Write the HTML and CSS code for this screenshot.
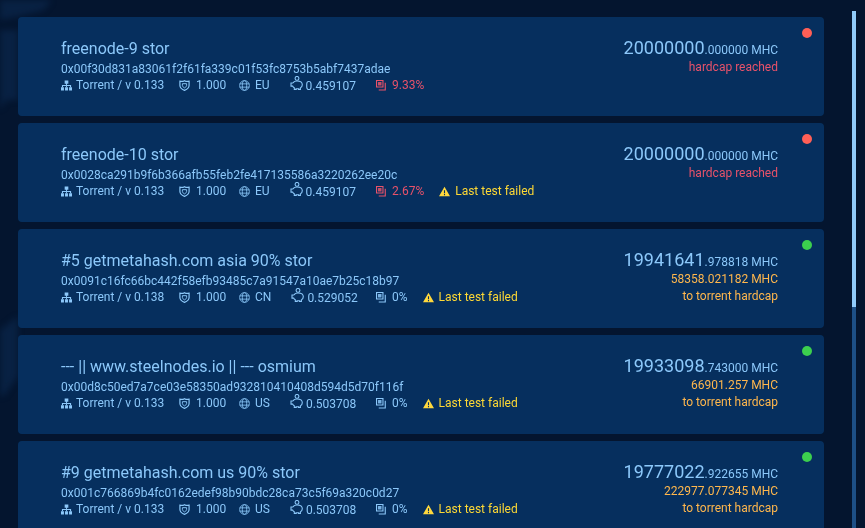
FILE: index.html
```html
<!DOCTYPE html>
<html lang="en">
<head>
<meta charset="utf-8">
<title>Nodes</title>
<link rel="stylesheet" href="styles.css">
</head>
<body>
<svg width="0" height="0" class="defs">
  <symbol id="i-net" viewBox="0 0 12 12"><path fill="currentColor" d="M4 .5h4V4H6.500v1.500H11V8H9.800v-1.500H6.500V8H5.500V6.500H2.200V8H1V5.500h4.500V4H4z"/><path fill="currentColor" d="M0 8h3.200v3.500H0zM4.400 8h3.200v3.500H4.400zM8.800 8H12v3.500H8.800z"/></symbol>
  <symbol id="i-shield" viewBox="0 0 12 12"><path fill="none" stroke="currentColor" stroke-width="1.300" d="M1 1.300c1.800.5 3.500.3 5-.6 1.500.9 3.200 1.100 5 .6v4.700c0 2.600-2.500 4.300-5 5.300-2.500-1-5-2.700-5-5.300z"/><path fill="none" stroke="currentColor" stroke-width="1" d="M3.700 4h4.600v2c0 1.100-1.100 2-2.300 2.600C4.800 8 3.700 7.100 3.700 6z"/></symbol>
  <symbol id="i-globe" viewBox="0 0 12 12"><g fill="none" stroke="currentColor" stroke-width=".9"><circle cx="6" cy="6" r="5.300"/><ellipse cx="6" cy="6" rx="2.400" ry="5.300"/><path d="M.8 4.200h10.400M.8 7.800h10.400"/></g></symbol>
  <symbol id="i-pig" viewBox="0 0 13 14"><g fill="none" stroke="currentColor" stroke-width="1.100"><circle cx="7" cy="2.400" r="1.900"/><path d="M3.200 6.600C3.900 5.400 5.300 5 7 5c3 0 5.300 1.500 5.300 3.800 0 1.500-.9 2.500-1.900 3.100v1.500H8.500v-.7H6.200v.7H4.300v-1.600c-.8-.4-1.300-1-1.600-1.700H1V7h1.700z"/></g></symbol>
  <symbol id="i-copy" viewBox="0 0 12 12"><path fill="currentColor" d="M0 0h8.200v8.200H0zM1.200 1.200v5.800h5.800V1.200z"/><path fill="currentColor" opacity=".85" d="M2.200 2.200h3.800v3.800H2.200z"/><path fill="currentColor" d="M9.500 3h1.200v8.500H3v-1.200h6.500z"/></symbol>
  <symbol id="i-warn" viewBox="0 0 12 12"><path fill="currentColor" fill-rule="evenodd" d="M6 .8l6 10.400H0zM5.400 4.500v3.500h1.200V4.500zM5.400 8.800V10h1.200V8.800z"/></symbol>
</svg>

<svg class="backdrop" viewBox="0 0 865 528" preserveAspectRatio="none" aria-hidden="true">
  <g class="land">
    <path d="M0 0h52L44 10 20 16 0 20z"/>
    <path d="M0 30h18v70H6L0 110z"/>
    <path d="M0 330l18-14v60l-14 20H0z"/>
  </g>
</svg>

<main class="list">
  <article class="card">
    <span class="dot dot-red"></span>
    <div class="info">
      <h2 class="name">freenode-9 stor</h2>
      <div class="addr">0x00f30d831a83061f2f61fa339c01f53fc8753b5abf7437adae</div>
      <div class="meta">
        <span class="m m-net"><svg class="ic"><use href="#i-net"/></svg>Torrent / v 0.133</span>
        <span class="m m-rate"><svg class="ic ic-shield"><use href="#i-shield"/></svg>1.000</span>
        <span class="geo-stake">
          <span class="m m-geo"><svg class="ic"><use href="#i-globe"/></svg>EU</span>
          <span class="m m-pig"><svg class="ic-pig"><use href="#i-pig"/></svg><span class="pig-val">0.459107</span></span>
        </span>
        <span class="m m-share red"><svg class="ic"><use href="#i-copy"/></svg>9.33%</span>
      </div>
    </div>
    <div class="amount">
      <div class="total"><b>20000000</b>.000000 MHC</div>
      <div class="red">hardcap reached</div>
    </div>
  </article>

  <article class="card">
    <span class="dot dot-red"></span>
    <div class="info">
      <h2 class="name">freenode-10 stor</h2>
      <div class="addr">0x0028ca291b9f6b366afb55feb2fe417135586a3220262ee20c</div>
      <div class="meta">
        <span class="m m-net"><svg class="ic"><use href="#i-net"/></svg>Torrent / v 0.133</span>
        <span class="m m-rate"><svg class="ic ic-shield"><use href="#i-shield"/></svg>1.000</span>
        <span class="geo-stake">
          <span class="m m-geo"><svg class="ic"><use href="#i-globe"/></svg>EU</span>
          <span class="m m-pig"><svg class="ic-pig"><use href="#i-pig"/></svg><span class="pig-val">0.459107</span></span>
        </span>
        <span class="m m-share red"><svg class="ic"><use href="#i-copy"/></svg>2.67%</span>
        <span class="m m-warn"><svg class="ic"><use href="#i-warn"/></svg>Last test failed</span>
      </div>
    </div>
    <div class="amount">
      <div class="total"><b>20000000</b>.000000 MHC</div>
      <div class="red">hardcap reached</div>
    </div>
  </article>

  <article class="card">
    <span class="dot dot-green"></span>
    <div class="info">
      <h2 class="name">#5 getmetahash.com asia 90% stor</h2>
      <div class="addr">0x0091c16fc66bc442f58efb93485c7a91547a10ae7b25c18b97</div>
      <div class="meta">
        <span class="m m-net"><svg class="ic"><use href="#i-net"/></svg>Torrent / v 0.138</span>
        <span class="m m-rate"><svg class="ic ic-shield"><use href="#i-shield"/></svg>1.000</span>
        <span class="geo-stake">
          <span class="m m-geo"><svg class="ic"><use href="#i-globe"/></svg>CN</span>
          <span class="m m-pig"><svg class="ic-pig"><use href="#i-pig"/></svg><span class="pig-val">0.529052</span></span>
        </span>
        <span class="m m-share"><svg class="ic"><use href="#i-copy"/></svg>0%</span>
        <span class="m m-warn"><svg class="ic"><use href="#i-warn"/></svg>Last test failed</span>
      </div>
    </div>
    <div class="amount">
      <div class="total"><b>19941641</b>.978818 MHC</div>
      <div class="orange">58358.021182 MHC</div>
      <div class="orange">to torrent hardcap</div>
    </div>
  </article>

  <article class="card">
    <span class="dot dot-green"></span>
    <div class="info">
      <h2 class="name">--- || www.steelnodes.io || --- osmium</h2>
      <div class="addr">0x00d8c50ed7a7ce03e58350ad932810410408d594d5d70f116f</div>
      <div class="meta">
        <span class="m m-net"><svg class="ic"><use href="#i-net"/></svg>Torrent / v 0.133</span>
        <span class="m m-rate"><svg class="ic ic-shield"><use href="#i-shield"/></svg>1.000</span>
        <span class="geo-stake">
          <span class="m m-geo"><svg class="ic"><use href="#i-globe"/></svg>US</span>
          <span class="m m-pig"><svg class="ic-pig"><use href="#i-pig"/></svg><span class="pig-val">0.503708</span></span>
        </span>
        <span class="m m-share"><svg class="ic"><use href="#i-copy"/></svg>0%</span>
        <span class="m m-warn"><svg class="ic"><use href="#i-warn"/></svg>Last test failed</span>
      </div>
    </div>
    <div class="amount">
      <div class="total"><b>19933098</b>.743000 MHC</div>
      <div class="orange">66901.257 MHC</div>
      <div class="orange">to torrent hardcap</div>
    </div>
  </article>

  <article class="card">
    <span class="dot dot-green"></span>
    <div class="info">
      <h2 class="name">#9 getmetahash.com us 90% stor</h2>
      <div class="addr">0x001c766869b4fc0162edef98b90bdc28ca73c5f69a320c0d27</div>
      <div class="meta">
        <span class="m m-net"><svg class="ic"><use href="#i-net"/></svg>Torrent / v 0.133</span>
        <span class="m m-rate"><svg class="ic ic-shield"><use href="#i-shield"/></svg>1.000</span>
        <span class="geo-stake">
          <span class="m m-geo"><svg class="ic"><use href="#i-globe"/></svg>US</span>
          <span class="m m-pig"><svg class="ic-pig"><use href="#i-pig"/></svg><span class="pig-val">0.503708</span></span>
        </span>
        <span class="m m-share"><svg class="ic"><use href="#i-copy"/></svg>0%</span>
        <span class="m m-warn"><svg class="ic"><use href="#i-warn"/></svg>Last test failed</span>
      </div>
    </div>
    <div class="amount">
      <div class="total"><b>19777022</b>.922655 MHC</div>
      <div class="orange">222977.077345 MHC</div>
      <div class="orange">to torrent hardcap</div>
    </div>
  </article>
</main>
<div class="scroll-track"><div class="scroll-thumb"></div></div>
</body>
</html>
```
FILE: styles.css
```css
html, body {
  margin: 0;
  height: 100%;
  overflow: hidden;
}
body {
  background: #04152f;
  font-family: Roboto, "Liberation Sans", sans-serif;
  font-size: 12px;
  color: #8cc8fa;
}
.defs { position: absolute; }
.backdrop {
  position: fixed;
  inset: 0;
  width: 100%;
  height: 100%;
}
.land { fill: #0d2c54; opacity: .55; filter: blur(3px); }
.list {
  position: relative;
  display: flex;
  flex-direction: column;
  gap: 7px;
  width: 806px;
  padding: 17px 0 0 18px;
}
.card {
  position: relative;
  flex: none;
  display: flex;
  justify-content: space-between;
  height: 99px;
  box-sizing: border-box;
  padding: 22px 46px 0 43px;
  background: rgba(6, 49, 96, .97);
  border-radius: 4px;
}
.dot {
  position: absolute;
  top: 11px;
  right: 12px;
  width: 10px;
  height: 10px;
  border-radius: 50%;
}
.dot-red { background: #ff5f56; }
.dot-green { background: #3ccf4e; }
.name {
  margin: 0;
  font-size: 16px;
  font-weight: 400;
  line-height: 19px;
}
.addr {
  margin-top: 4px;
  line-height: 14px;
}
.meta {
  display: flex;
  align-items: center;
  margin-top: 1px;
  height: 16px;
}
.m {
  display: inline-flex;
  align-items: center;
  white-space: nowrap;
}
.ic {
  flex: none;
  width: 11px;
  height: 11px;
  margin-right: 4px;
}
.ic-shield { margin-right: 6px; }
.m-net { width: 118px; }
.m-rate { width: 60px; }
.geo-stake {
  display: flex;
  align-items: center;
  width: 137px;
}
.m-geo { padding-right: 20px; }
.m-geo .ic { margin-right: 5px; }
.m-share .ic { margin-right: 5px; }
.ic-pig {
  flex: none;
  width: 13px;
  height: 14px;
  margin: -5px 3px 0 0;
}
.pig-val { padding-top: 2px; }
.m-share { padding-right: 15px; }
.m-warn { color: #fdd835; }
.m-warn .ic { color: #ffd83d; margin-right: 5px; }
.amount {
  text-align: right;
  line-height: 17px;
}
.total { line-height: 18px; }
.total b {
  font-size: 18px;
  font-weight: 400;
}
.red { color: #e8526a; }
.orange { color: #ffb74d; }
.scroll-track {
  position: fixed;
  top: 11px;
  bottom: 0;
  left: 852px;
  width: 4px;
  background: #1d4f86;
}
.scroll-thumb {
  height: 296px;
  background: #90caf9;
}
```
